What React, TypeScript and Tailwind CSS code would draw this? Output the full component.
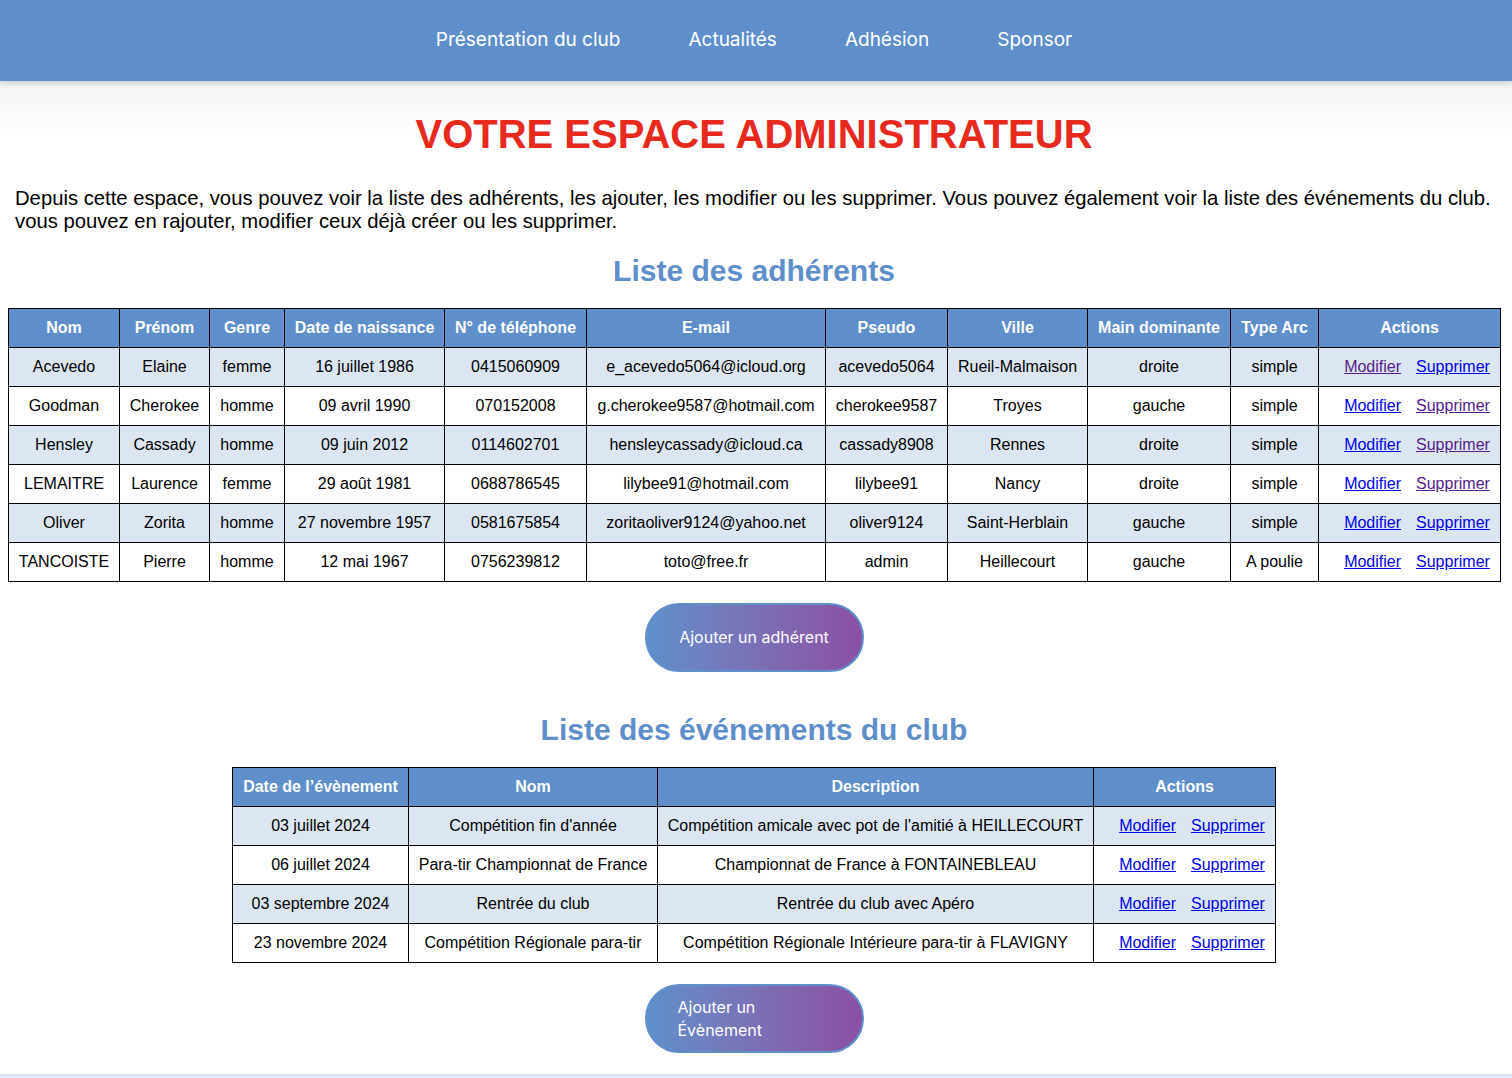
import React from 'react';

const navLinks = ['Présentation du club', 'Actualités', 'Adhésion', 'Sponsor'];

const memberCols = [
  { label: 'Nom', w: 'w-[111px]' },
  { label: 'Prénom', w: 'w-[90px]' },
  { label: 'Genre', w: 'w-[75px]' },
  { label: 'Date de naissance', w: 'w-[160px]' },
  { label: 'N° de téléphone', w: 'w-[142px]' },
  { label: 'E-mail', w: 'w-[239px]' },
  { label: 'Pseudo', w: 'w-[122px]' },
  { label: 'Ville', w: 'w-[140px]' },
  { label: 'Main dominante', w: 'w-[143px]' },
  { label: 'Type Arc', w: 'w-[88px]' },
  { label: 'Actions', w: 'w-[182px]' },
];

// mv / sv: the Modifier / Supprimer link was already visited
const members: { cells: string[]; mv: boolean; sv: boolean }[] = [
  { cells: ['Acevedo', 'Elaine', 'femme', '16 juillet 1986', '0415060909', 'e_acevedo5064@icloud.org', 'acevedo5064', 'Rueil-Malmaison', 'droite', 'simple'], mv: true, sv: false },
  { cells: ['Goodman', 'Cherokee', 'homme', '09 avril 1990', '070152008', 'g.cherokee9587@hotmail.com', 'cherokee9587', 'Troyes', 'gauche', 'simple'], mv: false, sv: true },
  { cells: ['Hensley', 'Cassady', 'homme', '09 juin 2012', '0114602701', 'hensleycassady@icloud.ca', 'cassady8908', 'Rennes', 'droite', 'simple'], mv: false, sv: true },
  { cells: ['LEMAITRE', 'Laurence', 'femme', '29 août 1981', '0688786545', 'lilybee91@hotmail.com', 'lilybee91', 'Nancy', 'droite', 'simple'], mv: false, sv: true },
  { cells: ['Oliver', 'Zorita', 'homme', '27 novembre 1957', '0581675854', 'zoritaoliver9124@yahoo.net', 'oliver9124', 'Saint-Herblain', 'gauche', 'simple'], mv: false, sv: false },
  { cells: ['TANCOISTE', 'Pierre', 'homme', '12 mai 1967', '0756239812', 'toto@free.fr', 'admin', 'Heillecourt', 'gauche', 'A poulie'], mv: false, sv: false },
];

const eventCols = [
  { label: 'Date de l’évènement', w: 'w-[176px]' },
  { label: 'Nom', w: 'w-[249px]' },
  { label: 'Description', w: 'w-[436px]' },
  { label: 'Actions', w: 'w-[182px]' },
];

const events = [
  ['03 juillet 2024', "Compétition fin d'année", "Compétition amicale avec pot de l'amitié à HEILLECOURT"],
  ['06 juillet 2024', 'Para-tir Championnat de France', 'Championnat de France à FONTAINEBLEAU'],
  ['03 septembre 2024', 'Rentrée du club', 'Rentrée du club avec Apéro'],
  ['23 novembre 2024', 'Compétition Régionale para-tir', 'Compétition Régionale Intérieure para-tir à FLAVIGNY'],
];

function Actions({ mv, sv }: { mv: boolean; sv: boolean }) {
  return (
    <td className="border border-black py-[10px] pr-[10px] pl-[25px] text-center whitespace-nowrap">
      <a href="#" className={`underline ${mv ? 'text-[#551a8b]' : 'text-[#0000ee]'}`}>Modifier</a>
      <a href="#" className={`underline ml-[15px] ${sv ? 'text-[#551a8b]' : 'text-[#0000ee]'}`}>Supprimer</a>
    </td>
  );
}

function GradientButton({ children }: { children: React.ReactNode }) {
  return (
    <a
      href="#"
      className="mx-auto flex h-[69px] w-[219px] items-center justify-center rounded-full border-2 border-[#5e8fca] bg-gradient-to-r from-[#5e8fca] to-[#8a4fa3] px-[31px] text-[16px] leading-[23px] text-white font-['Inter',sans-serif]"
    >
      <span className="text-left">{children}</span>
    </a>
  );
}

export default function App() {
  return (
    <div className="min-h-screen bg-white text-black font-['Liberation_Sans',Arial,sans-serif]">
      <header className="relative z-10 flex h-[81px] items-center justify-center gap-[68px] bg-[#5e8fca] pr-[4px] shadow-[0_2px_6px_rgba(0,0,0,0.18)] font-['Inter',sans-serif] text-[19px] text-white">
        {navLinks.map((l) => (
          <a key={l} href="#">{l}</a>
        ))}
      </header>

      <main className="bg-[linear-gradient(to_bottom,#f4f4f4,#ffffff_55px)]">
        <div className="ml-[8px] w-[1492px]">
          <h1 className="pt-[31px] text-center text-[40px] leading-[44px] font-bold text-[#e8291e]">
            VOTRE ESPACE ADMINISTRATEUR
          </h1>

          <p className="mt-[31px] px-[7px] text-[20.25px] leading-[23px]">
            Depuis cette espace, vous pouvez voir la liste des adhérents, les ajouter, les modifier ou les supprimer. Vous pouvez également voir la liste des événements du club. vous pouvez en rajouter, modifier ceux déjà créer ou les supprimer.
          </p>

          <h2 className="mt-[21px] text-center text-[30px] leading-[34px] font-bold text-[#5e8fca]">
            Liste des adhérents
          </h2>

          <table className="mt-[20px] w-[1492px] table-fixed border-collapse text-[16px] leading-[18px]">
            <thead>
              <tr className="bg-[#5e8fca] text-white">
                {memberCols.map((c) => (
                  <th key={c.label} className={`${c.w} border border-black py-[10px] font-bold whitespace-nowrap`}>{c.label}</th>
                ))}
              </tr>
            </thead>
            <tbody>
              {members.map((m, i) => (
                <tr key={m.cells[0]} className={i % 2 === 0 ? 'bg-[#dce6f2]' : 'bg-white'}>
                  {m.cells.map((c, j) => (
                    <td key={j} className="border border-black py-[10px] text-center whitespace-nowrap">{c}</td>
                  ))}
                  <Actions mv={m.mv} sv={m.sv} />
                </tr>
              ))}
            </tbody>
          </table>

          <div className="mt-[21px]">
            <GradientButton>Ajouter un adhérent</GradientButton>
          </div>

          <h2 className="mt-[41px] text-center text-[30px] leading-[34px] font-bold text-[#5e8fca]">
            Liste des événements du club
          </h2>

          <table className="mx-auto mt-[20px] w-[1043px] table-fixed border-collapse text-[16px] leading-[18px]">
            <thead>
              <tr className="bg-[#5e8fca] text-white">
                {eventCols.map((c) => (
                  <th key={c.label} className={`${c.w} border border-black py-[10px] font-bold whitespace-nowrap`}>{c.label}</th>
                ))}
              </tr>
            </thead>
            <tbody>
              {events.map((e, i) => (
                <tr key={e[0]} className={i % 2 === 0 ? 'bg-[#dce6f2]' : 'bg-white'}>
                  {e.map((c, j) => (
                    <td key={j} className="border border-black py-[10px] text-center whitespace-nowrap">{c}</td>
                  ))}
                  <Actions mv={false} sv={false} />
                </tr>
              ))}
            </tbody>
          </table>

          <div className="mt-[21px] pb-[21px]">
            <GradientButton>Ajouter un Évènement</GradientButton>
          </div>
        </div>
      </main>

      <footer className="h-[120px] bg-[#dce6f2]" />
    </div>
  );
}
